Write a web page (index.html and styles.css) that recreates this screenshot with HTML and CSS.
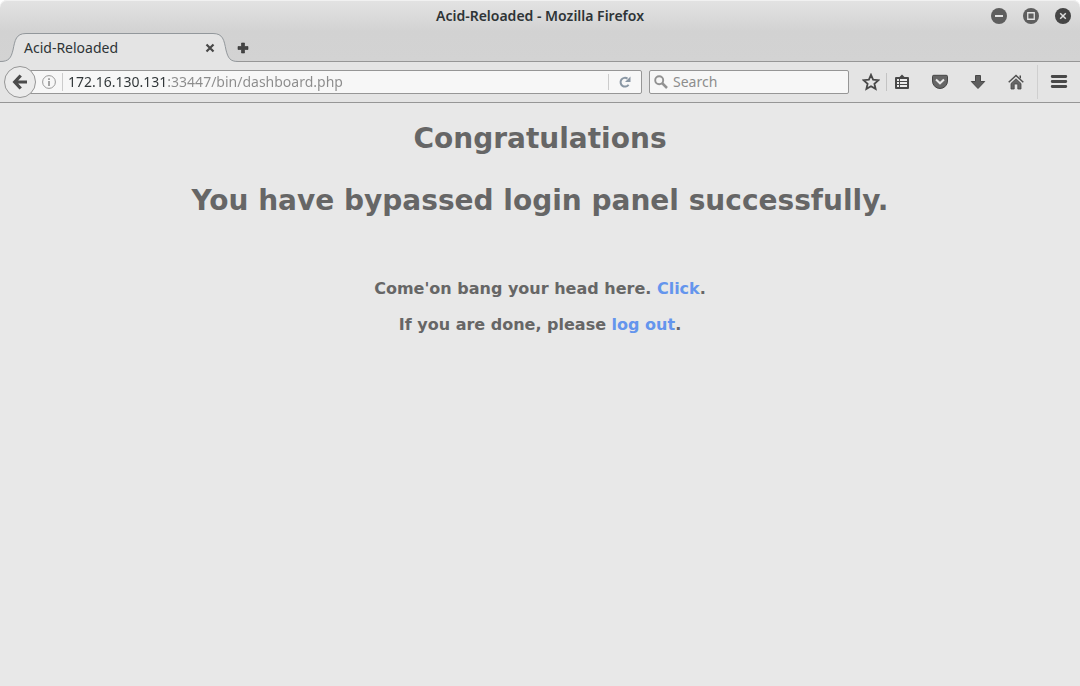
FILE: index.html
```html
<!DOCTYPE html>
<html lang="en">
<head>
<meta charset="utf-8">
<title>Acid-Reloaded</title>
<link rel="stylesheet" href="styles.css">
</head>
<body>
<div class="window">
  <header class="titlebar">
    <span class="window-title">Acid-Reloaded - Mozilla Firefox</span>
    <div class="window-buttons">
      <button class="window-button" aria-label="Minimize"><svg viewBox="0 0 16 16"><circle cx="8" cy="8" r="8" fill="#5e5e5e"/><path d="M4 8h8" stroke="#e4e4e4" stroke-width="2"/></svg></button>
      <button class="window-button" aria-label="Maximize"><svg viewBox="0 0 16 16"><circle cx="8" cy="8" r="8" fill="#5e5e5e"/><path d="M4.750 4.750h6.500v6.500h-6.500z" fill="none" stroke="#e4e4e4" stroke-width="1.300"/></svg></button>
      <button class="window-button" aria-label="Close"><svg viewBox="0 0 16 16"><circle cx="8" cy="8" r="8" fill="#454545"/><path d="M5.200 5.200l5.600 5.600M10.800 5.200l-5.600 5.600" stroke="#e0e0e0" stroke-width="1.500"/></svg></button>
    </div>
  </header>
  <nav class="tabstrip">
    <div class="tab">
      <svg class="tab-shape" viewBox="0 0 238 30" aria-hidden="true"><path d="M0 28.500C9 28.500 11 25 13 17C15 7 16 .5 26 .5H213C223 .5 224 7 226 17C228 25 230 28.500 238 28.500V30H0z" fill="#e4e4e4"/><path d="M0 28.500C9 28.500 11 25 13 17C15 7 16 .5 26 .5H213C223 .5 224 7 226 17C228 25 230 28.500 238 28.500" fill="none" stroke="#92979b"/></svg>
      <span class="tab-label">Acid-Reloaded</span>
      <button class="tab-close" aria-label="Close tab"><svg viewBox="0 0 10 10"><path d="M1.500 1.500l7 7M8.500 1.500l-7 7" stroke="#484848" stroke-width="2.200"/></svg></button>
    </div>
    <button class="new-tab" aria-label="New tab"><svg viewBox="0 0 12 12"><path d="M4.500 1h3v3.500H11v3H7.500V11h-3V7.500H1v-3h3.500z" fill="#454545" stroke="#333" stroke-width=".6"/></svg></button>
  </nav>
  <div class="toolbar">
    <button class="back" aria-label="Back"><svg viewBox="0 0 16 16"><path d="M8.700 1.500L2.700 8l6 6.500M3 8H15" fill="none" stroke="#4b4b4b" stroke-width="3.200"/></svg></button>
    <div class="address">
      <svg class="info" viewBox="0 0 14 14" aria-hidden="true"><circle cx="7" cy="7" r="6.400" fill="none" stroke="#999"/><path d="M7 3.200v1.700M7 6v5" stroke="#888" stroke-width="1.500"/></svg>
      <input class="url" type="text" aria-label="Address" value="172.16.130.131:33447/bin/dashboard.php">
      <button class="reload" aria-label="Reload"><svg viewBox="0 0 12 12"><path d="M9.600 8.700A4.400 4.400 0 1 1 8.500 2.600" fill="none" stroke="#8996a3" stroke-width="2"/><path d="M11.500.5V6H6z" fill="#8996a3"/></svg></button>
    </div>
    <label class="search"><svg class="lens" viewBox="0 0 14 14" aria-hidden="true"><circle cx="5.200" cy="5.200" r="4" fill="none" stroke="#929292" stroke-width="1.900"/><path d="M8 8l5 5" stroke="#929292" stroke-width="2.500"/></svg><input class="search-input" type="text" aria-label="Search" placeholder="Search"></label>
    <div class="tools">
      <button class="tool" aria-label="Bookmark this page"><svg viewBox="0 0 18 18"><path d="M9 1.800l2.100 4.900 5.300.5-4 3.500 1.200 5.200L9 13.200l-4.600 2.700 1.200-5.200-4-3.500 5.300-.5z" fill="none" stroke="#484848" stroke-width="1.800"/></svg></button>
      <button class="tool tool-list" aria-label="Bookmarks"><svg viewBox="0 0 18 18"><path d="M3 4h3.500L9 1.500 11.500 4H15a1 1 0 0 1 1 1v10a1 1 0 0 1-1 1H3a1 1 0 0 1-1-1V5a1 1 0 0 1 1-1z" fill="#484848"/><path d="M4 7h2M7 7h7M4 10h2M7 10h7M4 13h2M7 13h7" stroke="#ececec" stroke-width="1.900"/></svg></button>
      <button class="tool" aria-label="Pocket"><svg viewBox="0 0 18 18"><path d="M1.500 3.500q0-1.200 1.300-1.200h12.400q1.300 0 1.300 1.200V8A7.500 7.500 0 0 1 1.500 8z" fill="#666" stroke="#454545"/><path d="M5 6.500l4 3.800 4-3.800" fill="none" stroke="#e8e8e8" stroke-width="2"/></svg></button>
      <button class="tool" aria-label="Downloads"><svg viewBox="0 0 18 18"><path d="M6.500 2.500h5v6h4.200L9 15.500 2.300 8.500h4.200z" fill="#5e5e5e" stroke="#484848"/></svg></button>
      <button class="tool" aria-label="Home"><svg viewBox="0 0 18 18"><path d="M4 10.500l5-4.700 5 4.700V16h-3.200v-5H7.200v5H4z" fill="#666" stroke="#484848" stroke-width=".8"/><path d="M1.700 9.300L9 2.500l7.300 6.800" fill="none" stroke="#505050" stroke-width="1.500"/><path d="M12.500 2.500H14v3.200l-1.500-1.300z" fill="#484848"/></svg></button>
      <button class="tool tool-menu" aria-label="Open menu"><svg viewBox="0 0 18 18"><path d="M2.200 3.500h13.600M2.200 8.500h13.600M2.200 13.500h13.600" stroke="#484848" stroke-width="2.800" stroke-linecap="round"/></svg></button>
    </div>
  </div>
  <main class="page">
    <h1 class="heading">Congratulations</h1>
    <h1 class="heading">You have bypassed login panel successfully.</h1>
    <div class="messages">
      <p class="message">Come'on bang your head here. <a class="link" href="#">Click</a>.</p>
      <p class="message">If you are done, please <a class="link" href="#">log out</a>.</p>
    </div>
  </main>
</div>
</body>
</html>
```
FILE: styles.css
```css
* { box-sizing: border-box; }
body { margin: 0; background: #fff; font: 14px/20px "Noto Sans", "Open Sans", sans-serif; color: #2e3436; }
button { padding: 0; border: 0; background: none; display: flex; align-items: center; justify-content: center; }
svg { display: block; flex: none; }
.window { min-height: 100vh; display: flex; flex-direction: column; background: linear-gradient(#e3e3e3, #d2d2d2 32px, #d3d3d3 62px); border-radius: 7px 7px 0 0; box-shadow: inset 0 1px #f1f1f1; overflow: hidden; }
.titlebar { height: 32px; display: grid; grid-template-columns: 1fr auto 1fr; align-items: center; padding: 0 9px; }
.window-title { grid-column: 2; font-weight: 600; }
.window-buttons { display: flex; gap: 16px; justify-content: flex-end; }
.window-button, .window-button svg { width: 16px; height: 16px; }
.tabstrip { height: 30px; display: flex; align-items: center; border-bottom: 1px solid #969696; }
.tab { position: relative; width: 237px; height: 30px; flex: none; display: flex; align-items: center; justify-content: space-between; padding: 2px 22px 0 24px; }
.tab-shape { position: absolute; left: 0; top: 1px; width: 238px; height: 30px; }
.tab-label, .tab-close { position: relative; }
.tab-close svg { width: 10px; height: 10px; }
.new-tab { padding-top: 2px; }
.new-tab svg { width: 12px; height: 12px; }
.toolbar { height: 41px; display: flex; align-items: center; background: #e4e4e4; border-bottom: 1px solid #969696; padding: 0 12px 0 4px; }
.back { z-index: 1; flex: none; width: 32px; height: 32px; border: 1px solid #969696; border-radius: 50%; background: #ebebeb; }
.back svg { width: 16px; height: 16px; }
.address { flex: 1; min-width: 0; height: 24px; margin-left: -6px; padding-left: 11px; display: flex; align-items: center; border: 1px solid #969696; border-radius: 0 2px 2px 0; background: #f7f7f7; }
.info { width: 14px; height: 14px; margin-right: 6px; }
.url { flex: 1; min-width: 0; height: 18px; padding: 0 0 0 5px; border: solid transparent; border-width: 0 0 0 1px; border-image: linear-gradient(#ccc, #ccc) 1; font: inherit; color: transparent; caret-color: #2e3436; background: linear-gradient(90deg, #2e3436 105px, #8b8b8b 105px); background-clip: text; }
.reload { width: 33px; height: 16px; border-left: 1px solid #ccc; }
.reload svg { width: 12px; height: 12px; }
.search { width: 200px; height: 24px; margin-left: 7px; padding: 0 4px; display: flex; align-items: center; gap: 5px; border: 1px solid #969696; border-radius: 2px; background: #f7f7f7; }
.lens { width: 14px; height: 14px; }
.search-input { flex: 1; min-width: 0; padding: 0; border: 0; background: none; font: inherit; }
.search-input::placeholder { color: #8d8d8d; }
.tools { display: flex; align-items: center; gap: 20px; margin-left: 13px; }
.tool svg { width: 18px; height: 18px; }
.tool-list { margin-left: -14px; padding-left: 6px; height: 18px; border-left: 1px solid #c3c3c3; }
.tool-menu { margin-left: -8px; padding-left: 12px; height: 34px; border-left: 1px solid #cfcfcf; }
.page { flex: 1; background: #e8e8e8; color: #666; font-family: "DejaVu Sans", sans-serif; font-weight: bold; text-align: center; padding: 19px 8px; }
.heading { margin: 0 0 28px; font-size: 28px; line-height: 34px; }
.messages { padding-top: 33px; }
.message { margin: 0 0 16px; font-size: 16px; line-height: 20px; }
.link { color: #6495ed; text-decoration: none; }
```
